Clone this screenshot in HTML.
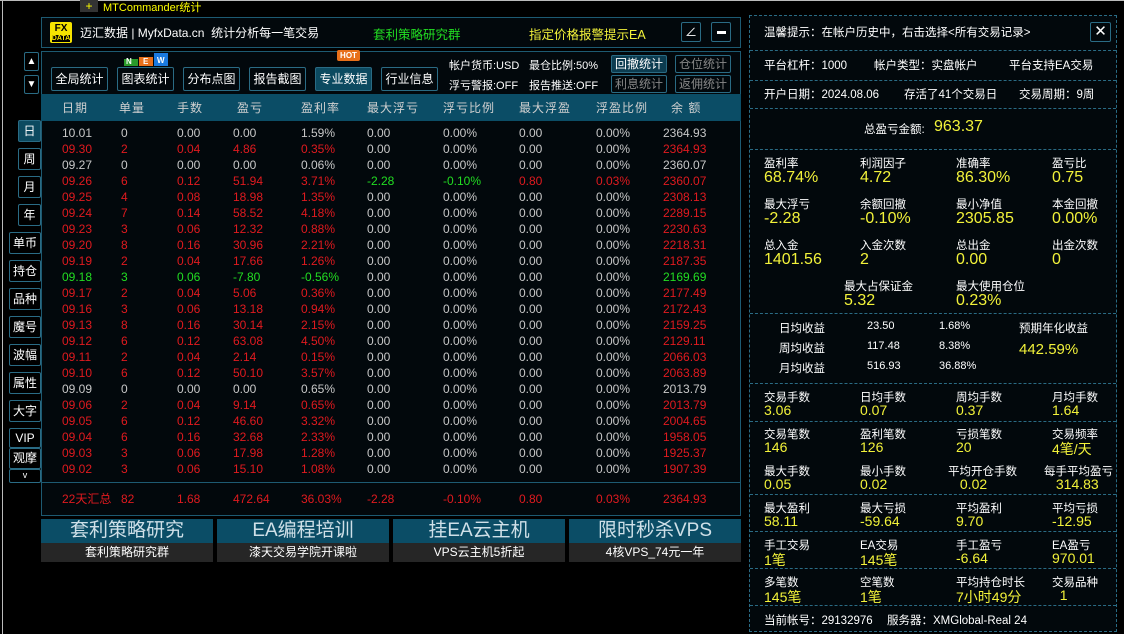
<!DOCTYPE html>
<html><head><meta charset="utf-8"><style>
*{margin:0;padding:0;box-sizing:border-box}
body{width:1124px;height:634px;background:#000;position:relative;overflow:hidden;font-family:"Liberation Sans","Noto Sans CJK SC",sans-serif;color:#fff;font-size:12px}
.a{position:absolute;white-space:nowrap}
.box{position:absolute;border:1px solid #1d5a72}
.btn{position:absolute;border:1px solid #2a6b84;border-radius:2px;color:#fff;font-size:12px;text-align:center;line-height:22px;height:24px;width:57px}
.sb{position:absolute;border:1px solid #2a6b84;border-radius:2px;font-size:12px;text-align:center;line-height:16px;height:18px;width:56px}
.side{position:absolute;border:1px solid #2a6b84;color:#fff;font-size:12px;text-align:center;border-radius:2px}
.hd{color:#d0d0d0;font-size:12px;top:99px;letter-spacing:1px}
.r{color:#e01a1f}.g{color:#c8c8c8}.gr{color:#22dd22}
.row{position:absolute;left:62px;height:16px;font-size:12px;line-height:16px;white-space:nowrap}
.row span{position:absolute;white-space:nowrap}
.lb{position:absolute;font-size:11.5px;color:#fff;white-space:nowrap}
.v{position:absolute;font-size:15px;color:#f2f23a;white-space:nowrap}
.dl{position:absolute;left:750px;width:366px;border-top:1px dashed #2a6b84}
</style></head><body>
<div class="a" style="left:0;top:0;width:1124px;height:1px;background:#bbb"></div>
<div class="a" style="left:2px;top:0;width:1px;height:634px;background:#bbb"></div>
<div class="a" style="left:80px;top:0;width:18px;height:12px;background:#333;color:#ff0;text-align:center;line-height:12px;font-size:12px">+</div>
<div class="a" style="left:103px;top:-1px;color:#ff0;font-size:11px">MTCommander统计</div>

<div class="box" style="left:41px;top:17px;width:700px;height:31px;background:#02080c"></div>
<div class="a" style="left:50px;top:22px;width:22px;height:21px;background:#f5e400;border-radius:2px;color:#000;font-weight:bold;font-size:10px;line-height:9px;text-align:center;padding-top:2px">FX<br><span style="font-size:7px;background:#000;color:#f5e400">DATA</span></div>
<div class="a" style="left:80px;top:24px;font-size:12px">迈汇数据 | MyfxData.cn &nbsp;统计分析每一笔交易</div>
<div class="a" style="left:373px;top:24px;font-size:12.5px;color:#22dd22">套利策略研究群</div>
<div class="a" style="left:529px;top:24px;font-size:12.5px;color:#f2f23a">指定价格报警提示EA</div>
<div class="a" style="left:681px;top:22px;width:20px;height:20px;border:1px solid #2a6b84;border-radius:2px;text-align:center;line-height:18px;font-size:12px">∠</div>
<div class="a" style="left:711px;top:22px;width:20px;height:20px;border:1px solid #2a6b84;border-radius:2px"><div style="position:absolute;left:5px;top:8px;width:9px;height:3px;background:#fff"></div></div>

<div class="a" style="left:24px;top:52px;width:15px;height:19px;border:1px solid #2a6b84;border-radius:2px;font-size:10px;text-align:center;line-height:17px">▲</div>
<div class="a" style="left:24px;top:75px;width:15px;height:19px;border:1px solid #2a6b84;border-radius:2px;font-size:10px;text-align:center;line-height:17px">▼</div>

<div class="box" style="left:41px;top:51px;width:700px;height:44px;background:#02080c"></div>
<div class="btn" style="left:51px;top:67px">全局统计</div>
<div class="btn" style="left:117px;top:67px">图表统计</div>
<div class="btn" style="left:183px;top:67px">分布点图</div>
<div class="btn" style="left:249px;top:67px">报告截图</div>
<div class="btn" style="left:315px;top:67px;background:#0c4a60">专业数据</div>
<div class="btn" style="left:381px;top:67px">行业信息</div>
<div class="a" style="left:124px;top:59px;width:14px;height:7px;background:#2a9a2a"></div>
<div class="a" style="left:139px;top:57px;width:14px;height:9px;background:#e8701a"></div>
<div class="a" style="left:154px;top:53px;width:14px;height:13px;background:#1a7ae0"></div>
<div class="a" style="left:126px;top:57px;font-size:8px;font-weight:bold">N</div>
<div class="a" style="left:143px;top:57px;font-size:8px;font-weight:bold">E</div>
<div class="a" style="left:157px;top:56px;font-size:8px;font-weight:bold">W</div>
<div class="a" style="left:337px;top:50px;width:23px;height:11px;background:#e8701a;border-radius:2px;font-size:8px;font-weight:bold;text-align:center;line-height:11px">HOT</div>
<div class="a" style="left:449px;top:57px;font-size:11px">帐户货币:USD</div>
<div class="a" style="left:529px;top:57px;font-size:11px">最仓比例:50%</div>
<div class="a" style="left:449px;top:77px;font-size:11px">浮亏警报:OFF</div>
<div class="a" style="left:529px;top:77px;font-size:11px">报告推送:OFF</div>
<div class="sb" style="left:611px;top:55px;background:#0c3c50;color:#fff">回撤统计</div>
<div class="sb" style="left:675px;top:55px;color:#888">仓位统计</div>
<div class="sb" style="left:611px;top:75px;color:#888">利息统计</div>
<div class="sb" style="left:675px;top:75px;color:#888">返佣统计</div>

<div class="a" style="left:41px;top:94px;width:700px;height:27px;background:#0b4d66"></div>
<div class="a hd" style="left:62px">日期</div><div class="a hd" style="left:119px">单量</div><div class="a hd" style="left:177px">手数</div><div class="a hd" style="left:237px">盈亏</div><div class="a hd" style="left:301px">盈利率</div><div class="a hd" style="left:367px">最大浮亏</div><div class="a hd" style="left:443px">浮亏比例</div><div class="a hd" style="left:519px">最大浮盈</div><div class="a hd" style="left:596px">浮盈比例</div><div class="a hd" style="left:671px">余 额</div>
<div class="box" style="left:41px;top:121px;width:700px;height:362px;background:#02080c;border-top:none"></div>
<div class="box" style="left:41px;top:482px;width:700px;height:34px;background:#02080c"></div>
<div id="rows"></div>
<div class="row r" style="top:491px"><span style="left:0">22天汇总</span><span style="left:59px">82</span><span style="left:115px">1.68</span><span style="left:171px">472.64</span><span style="left:239px">36.03%</span><span style="left:305px">-2.28</span><span style="left:381px">-0.10%</span><span style="left:457px">0.80</span><span style="left:534px">0.03%</span><span style="left:601px">2364.93</span></div>

<div class="side" style="left:18px;top:120px;width:23px;height:22px;line-height:20px;background:#0c4a60">日</div>
<div class="side" style="left:18px;top:148px;width:23px;height:22px;line-height:20px">周</div>
<div class="side" style="left:18px;top:176px;width:23px;height:22px;line-height:20px">月</div>
<div class="side" style="left:18px;top:204px;width:23px;height:22px;line-height:20px">年</div>
<div class="side" style="left:9px;top:232px;width:32px;height:22px;line-height:20px">单币</div>
<div class="side" style="left:9px;top:260px;width:32px;height:22px;line-height:20px">持仓</div>
<div class="side" style="left:9px;top:288px;width:32px;height:22px;line-height:20px">品种</div>
<div class="side" style="left:9px;top:316px;width:32px;height:22px;line-height:20px">魔号</div>
<div class="side" style="left:9px;top:344px;width:32px;height:22px;line-height:20px">波幅</div>
<div class="side" style="left:9px;top:372px;width:32px;height:22px;line-height:20px">属性</div>
<div class="side" style="left:9px;top:400px;width:32px;height:22px;line-height:20px">大字</div>
<div class="side" style="left:9px;top:428px;width:32px;height:20px;line-height:18px">VIP</div>
<div class="side" style="left:9px;top:448px;width:32px;height:21px;line-height:19px">观摩</div>
<div class="side" style="left:9px;top:469px;width:32px;height:14px;line-height:10px;font-size:9px">v</div>

<div class="a" style="left:41px;top:519px;width:172px;height:24px;background:#0b4d66;color:#cfe0e8;font-size:19px;text-align:center;line-height:24px">套利策略研究</div>
<div class="a" style="left:217px;top:519px;width:172px;height:24px;background:#0b4d66;color:#cfe0e8;font-size:19px;text-align:center;line-height:24px">EA编程培训</div>
<div class="a" style="left:393px;top:519px;width:172px;height:24px;background:#0b4d66;color:#cfe0e8;font-size:19px;text-align:center;line-height:24px">挂EA云主机</div>
<div class="a" style="left:569px;top:519px;width:172px;height:24px;background:#0b4d66;color:#cfe0e8;font-size:19px;text-align:center;line-height:24px">限时秒杀VPS</div>
<div class="a" style="left:41px;top:543px;width:172px;height:19px;background:#262626;font-size:12px;text-align:center;line-height:19px">套利策略研究群</div>
<div class="a" style="left:217px;top:543px;width:172px;height:19px;background:#262626;font-size:12px;text-align:center;line-height:19px">漆天交易学院开课啦</div>
<div class="a" style="left:393px;top:543px;width:172px;height:19px;background:#262626;font-size:12px;text-align:center;line-height:19px">VPS云主机5折起</div>
<div class="a" style="left:569px;top:543px;width:172px;height:19px;background:#262626;font-size:12px;text-align:center;line-height:19px">4核VPS_74元一年</div>

<div class="a" style="left:749px;top:15px;width:368px;height:617px;border:1px dashed #2a6b84;background:#02080c"></div>
<div class="lb" style="left:764px;top:24px">温馨提示：在帐户历史中，右击选择&lt;所有交易记录&gt;</div>
<div class="a" style="left:1090px;top:22px;width:21px;height:20px;border:1px solid #2a6b84;border-radius:2px;text-align:center;line-height:18px;font-size:15px">✕</div>
<div class="dl" style="top:50px"></div>
<div class="lb" style="left:764px;top:57px">平台杠杆：1000</div><div class="lb" style="left:874px;top:57px">帐户类型：实盘帐户</div><div class="lb" style="left:1009px;top:57px">平台支持EA交易</div>
<div class="dl" style="top:80px"></div>
<div class="lb" style="left:764px;top:86px">开户日期：2024.08.06</div><div class="lb" style="left:904px;top:86px">存活了41个交易日</div><div class="lb" style="left:1019px;top:86px">交易周期：9周</div>
<div class="dl" style="top:108px"></div>
<div class="lb" style="left:864px;top:121px">总盈亏金额:</div><div class="v" style="left:934px;top:118px;font-size:16px">963.37</div>
<div class="dl" style="top:149px"></div>
<div id="grid"></div>
<div class="lb" style="left:844px;top:278px">最大占保证金</div><div class="v" style="left:844px;top:292px;font-size:16px">5.32</div>
<div class="lb" style="left:956px;top:278px">最大使用仓位</div><div class="v" style="left:956px;top:292px;font-size:16px">0.23%</div>
<div class="dl" style="top:313px"></div>
<div class="lb" style="left:779px;top:320px">日均收益</div><div class="lb" style="left:867px;top:320px;font-size:11px">23.50</div><div class="lb" style="left:939px;top:320px;font-size:11px">1.68%</div>
<div class="lb" style="left:779px;top:340px">周均收益</div><div class="lb" style="left:867px;top:340px;font-size:11px">117.48</div><div class="lb" style="left:939px;top:340px;font-size:11px">8.38%</div>
<div class="lb" style="left:779px;top:360px">月均收益</div><div class="lb" style="left:867px;top:360px;font-size:11px">516.93</div><div class="lb" style="left:939px;top:360px;font-size:11px">36.88%</div>
<div class="lb" style="left:1019px;top:320px">预期年化收益</div><div class="v" style="left:1019px;top:341px">442.59%</div>
<div class="dl" style="top:383px"></div>
<div class="dl" style="top:421px"></div>
<div class="dl" style="top:494px"></div>
<div class="dl" style="top:531px"></div>
<div class="dl" style="top:568px"></div>
<div class="dl" style="top:605px"></div>
<div class="lb" style="left:764px;top:612px">当前帐号：29132976</div><div class="lb" style="left:887px;top:612px">服务器：XMGlobal-Real 24</div>

<script>
var d=[["10.01","0","0.00","0.00","1.59%","2364.93","g"],["09.30","2","0.04","4.86","0.35%","2364.93","r"],["09.27","0","0.00","0.00","0.06%","2360.07","g"],["09.26","6","0.12","51.94","3.71%","2360.07","r",1],["09.25","4","0.08","18.98","1.35%","2308.13","r"],["09.24","7","0.14","58.52","4.18%","2289.15","r"],["09.23","3","0.06","12.32","0.88%","2230.63","r"],["09.20","8","0.16","30.96","2.21%","2218.31","r"],["09.19","2","0.04","17.66","1.26%","2187.35","r"],["09.18","3","0.06","-7.80","-0.56%","2169.69","gr"],["09.17","2","0.04","5.06","0.36%","2177.49","r"],["09.16","3","0.06","13.18","0.94%","2172.43","r"],["09.13","8","0.16","30.14","2.15%","2159.25","r"],["09.12","6","0.12","63.08","4.50%","2129.11","r"],["09.11","2","0.04","2.14","0.15%","2066.03","r"],["09.10","6","0.12","50.10","3.57%","2063.89","r"],["09.09","0","0.00","0.00","0.65%","2013.79","g"],["09.06","2","0.04","9.14","0.65%","2013.79","r"],["09.05","6","0.12","46.60","3.32%","2004.65","r"],["09.04","6","0.16","32.68","2.33%","1958.05","r"],["09.03","3","0.06","17.98","1.28%","1925.37","r"],["09.02","3","0.06","15.10","1.08%","1907.39","r"]];
var h="";d.forEach(function(r,i){var t=125+i*16;var w='<span class="g" style="left:305px">0.00</span><span class="g" style="left:381px">0.00%</span><span class="g" style="left:457px">0.00</span><span class="g" style="left:534px">0.00%</span>';
if(r[7])w='<span class="gr" style="left:305px">-2.28</span><span class="gr" style="left:381px">-0.10%</span><span class="r" style="left:457px">0.80</span><span class="r" style="left:534px">0.03%</span>';
h+='<div class="row '+r[6]+'" style="top:'+t+'px"><span style="left:0">'+r[0]+'</span><span style="left:59px">'+r[1]+'</span><span style="left:115px">'+r[2]+'</span><span style="left:171px">'+r[3]+'</span><span style="left:239px">'+r[4]+'</span>'+w+'<span style="left:601px">'+r[5]+'</span></div>';});
document.getElementById("rows").innerHTML=h;
var g=[[155,[["盈利率","68.74%"],["利润因子","4.72"],["准确率","86.30%"],["盈亏比","0.75"]],1],[196,[["最大浮亏","-2.28"],["余额回撤","-0.10%"],["最小净值","2305.85"],["本金回撤","0.00%"]],1],[237,[["总入金","1401.56"],["入金次数","2"],["总出金","0.00"],["出金次数","0"]],1],
[389,[["交易手数","3.06"],["日均手数","0.07"],["周均手数","0.37"],["月均手数","1.64"]]],[426,[["交易笔数","146"],["盈利笔数","126"],["亏损笔数","20"],["交易频率","4笔/天"]]],[463,[["最大手数","0.05"],["最小手数","0.02"],["平均开仓手数"," 0.02"],["每手平均盈亏"," 314.83"]]],[500,[["最大盈利","58.11"],["最大亏损","-59.64"],["平均盈利","9.70"],["平均亏损","-12.95"]]],[537,[["手工交易","1笔"],["EA交易","145笔"],["手工盈亏","-6.64"],["EA盈亏","970.01"]]],[574,[["多笔数","145笔"],["空笔数","1笔"],["平均持仓时长","7小时49分"],["交易品种","  1"]]]];
var xs=[764,860,956,1052],o="";g.forEach(function(s){s[1].forEach(function(c,j){var x=xs[j];if(j==2&&s[0]==463)x=948;if(j==3&&s[0]==463)x=1044;
o+='<div class="lb" style="left:'+x+'px;top:'+s[0]+'px">'+c[0]+'</div><div class="v" style="left:'+xs[j]+'px;top:'+(s[0]+(s[2]?14:13))+'px;font-size:'+(s[2]?16:14)+'px;white-space:pre">'+c[1]+'</div>';});});
document.getElementById("grid").innerHTML=o;
</script>
</body></html>
